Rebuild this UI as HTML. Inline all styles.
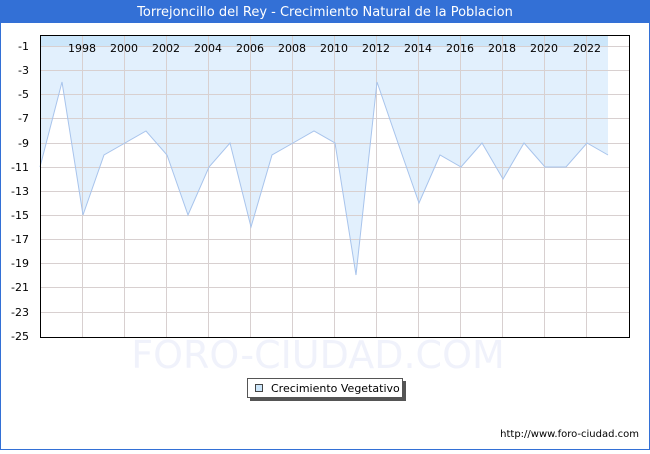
<!DOCTYPE html>
<html><head><style>
body{margin:0;width:650px;height:450px;overflow:hidden;font-family:"DejaVu Sans","Liberation Sans",sans-serif;}
</style></head><body>
<svg width="650" height="450" xmlns="http://www.w3.org/2000/svg" font-family="DejaVu Sans, Liberation Sans, sans-serif">
<rect x="0" y="0" width="650" height="450" fill="#fff"/>
<rect x="0.5" y="0.5" width="649" height="449" fill="none" stroke="#3370d6"/>
<rect x="0" y="0" width="650" height="23" fill="#3370d6"/>
<text x="325" y="16" fill="#fff" font-size="13" text-anchor="middle">Torrejoncillo del Rey - Crecimiento Natural de la Poblacion</text>
<text x="318" y="368" fill="#f0f2fb" font-size="38" text-anchor="middle">FORO-CIUDAD.COM</text>
<g id="plot">
<polygon fill="#e2f0fd" points="40,35 608,35 608,155 587,143 566,167 545,167 524,143 503,179 482,143 461,167 440,155 419,203 398,143 377,82 356,275 335,143 314,131 293,143 272,155 251,227 230,143 209,167 188,215 167,155 146,131 125,143 104,155 83,215 62,82 40,167"/>
<rect x="40" y="35" width="568" height="12" fill="#cce6fa"/>
<g stroke="#d8d0d0" stroke-width="1">
<line x1="40" x2="630" y1="46.5" y2="46.5"/><line x1="40" x2="630" y1="70.5" y2="70.5"/><line x1="40" x2="630" y1="94.5" y2="94.5"/><line x1="40" x2="630" y1="118.5" y2="118.5"/><line x1="40" x2="630" y1="143.5" y2="143.5"/><line x1="40" x2="630" y1="167.5" y2="167.5"/><line x1="40" x2="630" y1="191.5" y2="191.5"/><line x1="40" x2="630" y1="215.5" y2="215.5"/><line x1="40" x2="630" y1="239.5" y2="239.5"/><line x1="40" x2="630" y1="263.5" y2="263.5"/><line x1="40" x2="630" y1="287.5" y2="287.5"/><line x1="40" x2="630" y1="312.5" y2="312.5"/>
<line y1="35" y2="338" x1="82.5" x2="82.5"/><line y1="35" y2="338" x1="124.5" x2="124.5"/><line y1="35" y2="338" x1="166.5" x2="166.5"/><line y1="35" y2="338" x1="208.5" x2="208.5"/><line y1="35" y2="338" x1="250.5" x2="250.5"/><line y1="35" y2="338" x1="292.5" x2="292.5"/><line y1="35" y2="338" x1="334.5" x2="334.5"/><line y1="35" y2="338" x1="376.5" x2="376.5"/><line y1="35" y2="338" x1="418.5" x2="418.5"/><line y1="35" y2="338" x1="460.5" x2="460.5"/><line y1="35" y2="338" x1="502.5" x2="502.5"/><line y1="35" y2="338" x1="544.5" x2="544.5"/><line y1="35" y2="338" x1="586.5" x2="586.5"/>
</g>
<polyline fill="none" stroke="#a8c4ec" stroke-width="1" points="40,167 62,82 83,215 104,155 125,143 146,131 167,155 188,215 209,167 230,143 251,227 272,155 293,143 314,131 335,143 356,275 377,82 398,143 419,203 440,155 461,167 482,143 503,179 524,143 545,167 566,167 587,143 608,155"/>
<rect x="40.5" y="35.5" width="589" height="302" fill="none" stroke="#000"/>
</g>
<g font-size="11" fill="#000" text-anchor="end">
<text x="29" y="50">-1</text><text x="29" y="74">-3</text><text x="29" y="98">-5</text><text x="29" y="122">-7</text><text x="29" y="147">-9</text><text x="29" y="171">-11</text><text x="29" y="195">-13</text><text x="29" y="219">-15</text><text x="29" y="243">-17</text><text x="29" y="267">-19</text><text x="29" y="291">-21</text><text x="29" y="316">-23</text><text x="29" y="340">-25</text>
</g>
<g font-size="11" fill="#000" text-anchor="middle">
<text x="82" y="52">1998</text><text x="124" y="52">2000</text><text x="166" y="52">2002</text><text x="208" y="52">2004</text><text x="250" y="52">2006</text><text x="292" y="52">2008</text><text x="334" y="52">2010</text><text x="376" y="52">2012</text><text x="418" y="52">2014</text><text x="460" y="52">2016</text><text x="502" y="52">2018</text><text x="544" y="52">2020</text><text x="587" y="52">2022</text>
</g>
<rect x="250" y="381" width="156" height="20" fill="#555"/>
<rect x="247.5" y="378.5" width="155" height="19" fill="#fff" stroke="#555"/>
<rect x="255.5" y="384.5" width="7" height="7" fill="#cce6fa" stroke="#444"/>
<text x="271" y="392" font-size="11" fill="#000">Crecimiento Vegetativo</text>
<text x="639" y="437" font-size="10" fill="#000" text-anchor="end">http://www.foro-ciudad.com</text>
</svg>
</body></html>
